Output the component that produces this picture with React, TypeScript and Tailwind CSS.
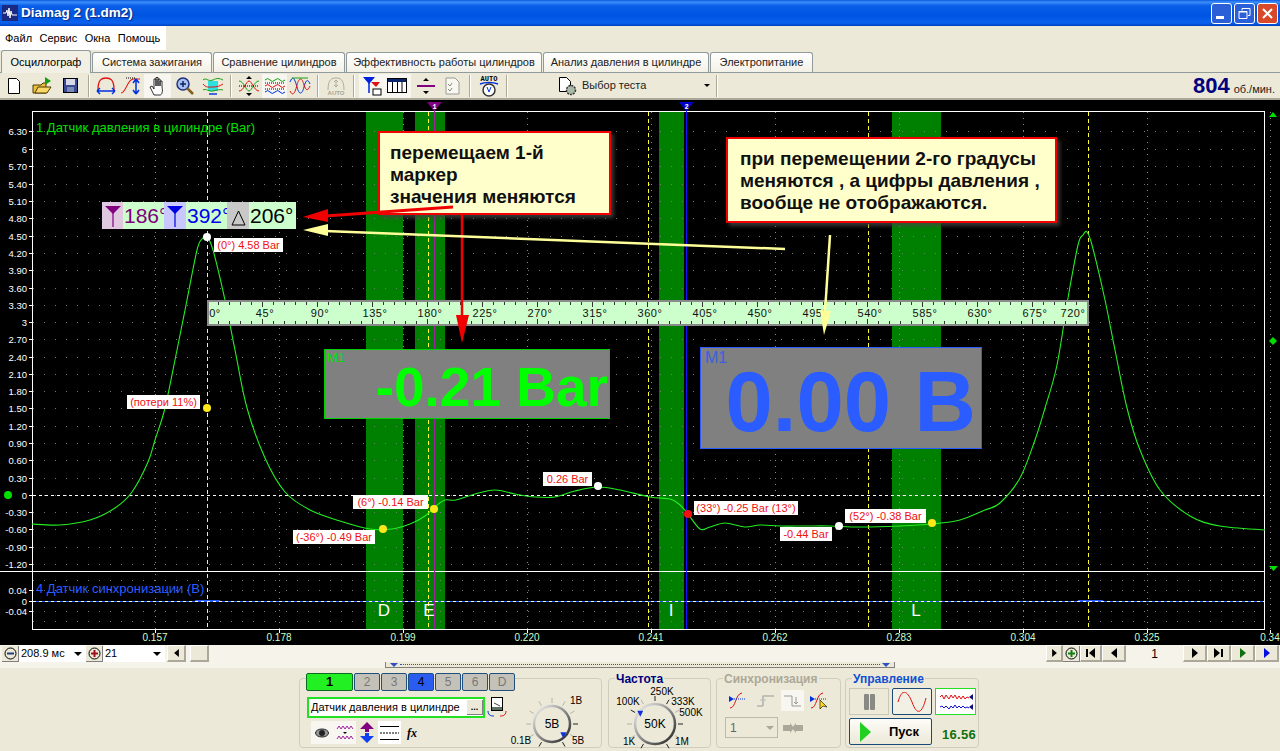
import React from 'react';

const FONT = "font-['Liberation_Sans',Arial,sans-serif]";

const yLabels: [string, number][] = [
  ['6.30', 131], ['6', 149], ['5.70', 166], ['5.40', 184], ['5.10', 201], ['4.80', 218], ['4.50', 236],
  ['4.20', 253], ['3.90', 270], ['3.60', 288], ['3.30', 305], ['3', 322], ['2.70', 339], ['2.40', 357],
  ['2.10', 374], ['1.80', 391], ['1.50', 408], ['1.20', 426], ['0.90', 443], ['0.60', 460], ['0.30', 478],
  ['0', 495], ['-0.30', 512], ['-0.60', 529], ['-0.90', 547], ['-1.20', 564],
  ['0.04', 590], ['0', 601], ['-0.04', 611],
];
const xLabels: [string, number][] = [
  ['0.157', 155], ['0.178', 279], ['0.199', 403], ['0.220', 527], ['0.241', 651],
  ['0.262', 775], ['0.283', 899], ['0.304', 1023], ['0.325', 1147], ['0.34', 1270],
];
const bands: [number, number][] = [[366, 403], [415, 445], [659, 684], [892, 941]];
const bandLetters: [string, number][] = [['D', 384], ['E', 429], ['I', 671], ['L', 916]];
const degrees = ['0°', '45°', '90°', '135°', '180°', '225°', '270°', '315°', '360°', '405°', '450°', '495°', '540°', '585°', '630°', '675°', '720°'];

const curve: [number, number][] = [
  [32, 524], [60, 525], [90, 520], [115, 508], [132, 492], [148, 462], [155, 440], [165, 408], [177, 350], [187, 300], [197, 250], [202, 239], [207, 237],
  [213, 250], [225, 300], [235, 350], [247, 408], [265, 458], [285, 492], [310, 510], [340, 521], [370, 529], [392, 529],
  [410, 524], [425, 516], [436, 506], [445, 500], [456, 500], [475, 494], [495, 490], [515, 494], [535, 497], [555, 497],
  [575, 491], [598, 487], [620, 490], [650, 497], [670, 499], [680, 505], [688, 514], [700, 529], [710, 527], [725, 523],
  [745, 527], [760, 525], [780, 526], [805, 526], [830, 526], [860, 527], [900, 526], [932, 524], [960, 520], [985, 510],
  [1000, 503], [1020, 478], [1035, 440], [1045, 408], [1057, 365], [1068, 298], [1078, 245], [1083, 235], [1087, 232],
  [1092, 245], [1105, 300], [1115, 350], [1127, 408], [1140, 450], [1160, 490], [1190, 516], [1220, 526], [1265, 530],
];

function smooth(pts: [number, number][]) {
  let d = `M${pts[0][0]} ${pts[0][1]}`;
  for (let i = 0; i < pts.length - 1; i++) {
    const p0 = pts[Math.max(i - 1, 0)];
    const p1 = pts[i];
    const p2 = pts[i + 1];
    const p3 = pts[Math.min(i + 2, pts.length - 1)];
    const c1x = p1[0] + (p2[0] - p0[0]) / 6;
    const c1y = p1[1] + (p2[1] - p0[1]) / 6;
    const c2x = p2[0] - (p3[0] - p1[0]) / 6;
    const c2y = p2[1] - (p3[1] - p1[1]) / 6;
    d += ` C${c1x.toFixed(1)} ${c1y.toFixed(1)} ${c2x.toFixed(1)} ${c2y.toFixed(1)} ${p2[0]} ${p2[1]}`;
  }
  return d;
}

const range = (from: number, to: number, step: number) => {
  const out: number[] = [];
  for (let v = from; v <= to; v += step) out.push(v);
  return out;
};

function PlotSvg() {
  const gridY = [...yLabels.map((l) => l[1]), 580, 621];
  return (
    <svg width="1280" height="545" viewBox="0 100 1280 545" className="absolute left-0 top-0">
      {bands.map(([a, b]) => <rect key={a} x={a} y={112} width={b - a} height={517} fill="#008000" />)}
      {/* dotted grid */}
      {gridY.map((y, i) => (
        <line key={i} x1={33} x2={1264} y1={y + 0.5} y2={y + 0.5} stroke="#777" strokeDasharray="1 10" />
      ))}
      {xLabels.map(([t, x]) => (
        <line key={t} x1={x + 0.5} x2={x + 0.5} y1={112} y2={629} stroke="#888" strokeDasharray="1 5" />
      ))}
      {/* yellow degree lines */}
      {[207, 428, 648, 868, 1088].map((x) => (
        <line key={x} x1={x + 0.5} x2={x + 0.5} y1={112} y2={629} stroke="#ffff33" strokeDasharray="4 3" />
      ))}
      {/* zero lines */}
      <line x1={33} x2={1264} y1={495.5} y2={495.5} stroke="#fff" strokeDasharray="3 3" />
      <line x1={33} x2={1264} y1={601.5} y2={601.5} stroke="#2a5cff" />
      <line x1={33} x2={1264} y1={601.5} y2={601.5} stroke="#fff" strokeDasharray="3 3" />
      {/* frame */}
      <rect x={32.5} y={111.5} width={1232} height={518} fill="none" stroke="#fff" />
      <line x1={0} x2={1265} y1={571.5} y2={571.5} stroke="#fff" />
      {/* axis ticks */}
      {yLabels.map(([t, y]) => <line key={t + y} x1={29} x2={32} y1={y + 0.5} y2={y + 0.5} stroke="#fff" />)}
      {xLabels.map(([t, x]) => <line key={t} x1={x + 0.5} x2={x + 0.5} y1={630} y2={633} stroke="#fff" />)}
      {yLabels.map(([t, y]) => (
        <text key={t + y} x={27} y={y + 4} fill="#fff" fontSize="9.5" textAnchor="end" fontFamily="Liberation Sans">{t}</text>
      ))}
      {xLabels.map(([t, x]) => (
        <text key={t} x={x} y={641} fill="#ccffcc" fontSize="10" textAnchor="middle" fontFamily="Liberation Sans">{t}</text>
      ))}
      {/* marker cursors */}
      <line x1={434.5} x2={434.5} y1={108} y2={629} stroke="#a020a0" />
      <line x1={686.5} x2={686.5} y1={108} y2={629} stroke="#1414ff" />
      <polygon points="427,102 442,102 434,111" fill="#800080" />
      <polygon points="679,102 694,102 686,111" fill="#0000c8" />
      <text x={434.5} y={109} fill="#fff" fontSize="7" fontWeight="700" textAnchor="middle" fontFamily="Liberation Mono">1</text>
      <text x={686.5} y={109} fill="#fff" fontSize="7" fontWeight="700" textAnchor="middle" fontFamily="Liberation Mono">2</text>
      {/* trace */}
      <path d={smooth(curve)} fill="none" stroke="#22ee22" strokeWidth="1.1" />
      <path d="M195 600.5 h25 M1078 600.5 h25" stroke="#2a5cff" strokeWidth="1" />
      {/* side markers */}
      <polygon points="1269,117 1277,117 1273,112" fill="#00e000" />
      <polygon points="1269,341 1273,337 1277,341 1273,345" fill="#00e000" />
      <polygon points="1269,566 1278,566 1273.5,571" fill="#00e000" />
      <circle cx={8} cy={495} r={4} fill="#00e000" />
      {/* points */}
      <circle cx={207} cy={237} r={4} fill="#fff" />
      <circle cx={207} cy={408} r={4} fill="#ffe81a" />
      <circle cx={383} cy={529} r={4} fill="#ffe81a" />
      <circle cx={434} cy={509} r={4} fill="#ffe81a" />
      <circle cx={598} cy={486} r={4} fill="#fff" />
      <circle cx={688} cy={514} r={4} fill="#f01010" />
      <circle cx={839} cy={526} r={4} fill="#fff" />
      <circle cx={932} cy={523} r={4} fill="#ffe81a" />
    </svg>
  );
}

function Tag({ x, y, w, children }: { x: number; y: number; w: number; children: React.ReactNode }) {
  return (
    <div
      className="absolute h-[14px] bg-white text-center text-[11px] leading-[14px] whitespace-nowrap text-[#f01010]"
      style={{ left: x, top: y - 100, width: w }}
    >
      {children}
    </div>
  );
}

function Callouts() {
  return (
    <>
      <div className="absolute left-[378px] top-[31px] h-[84px] w-[233px] border-2 border-[#f00000] bg-[#ffffcc] pl-[10px] pt-[9px] text-[19px] leading-[22px] font-bold text-[#101010] shadow-[3px_3px_4px_rgba(70,70,70,.8)]">
        перемещаем 1-й<br />маркер<br />значения меняются
      </div>
      <div className="absolute left-[726px] top-[37px] h-[86px] w-[331px] border-2 border-[#f00000] bg-[#ffffcc] pl-[12px] pt-[9px] text-[19px] leading-[22px] font-bold whitespace-nowrap text-[#101010] shadow-[3px_3px_4px_rgba(70,70,70,.8)]">
        при перемещении 2-го градусы<br />меняются , а цифры давления ,<br />вообще не отображаются.
      </div>
      <svg width="1280" height="545" viewBox="0 100 1280 545" className="absolute left-0 top-0">
        <path d="M453 207 L325 216" stroke="#f00000" strokeWidth="3" fill="none" />
        <polygon points="303,217 328,209 328,222" fill="#f00000" />
        <path d="M462 213 L462 320" stroke="#f00000" strokeWidth="2.5" fill="none" />
        <polygon points="462,343 456,315 469,315" fill="#f00000" />
        <path d="M785 249 L325 231" stroke="#ffff99" strokeWidth="2.5" fill="none" />
        <polygon points="303,230 328,224 328,236" fill="#ffff99" />
        <path d="M830 235 L825 312" stroke="#ffff99" strokeWidth="2.5" fill="none" />
        <polygon points="824,335 820,310 831,311" fill="#ffff99" />
      </svg>
    </>
  );
}

function MarkerGlyph({ color }: { color: string }) {
  return (
    <svg width="16" height="24" viewBox="0 0 16 24">
      <polygon points="0,2 16,2 8,10" fill={color} />
      <rect x="7.4" y="3" width="1.2" height="20" fill={color} />
    </svg>
  );
}

function Readout() {
  return (
    <div className="absolute left-[102px] top-[102px] flex h-[27px] w-[194px] items-center overflow-hidden bg-[#ccffcc] text-[21px] leading-[27px]">
      <div className="flex h-full w-[21px] shrink-0 items-center justify-center bg-[#e0c8e0]"><MarkerGlyph color="#800080" /></div>
      <div className="h-full w-[41px] shrink-0 overflow-hidden pl-[1px] whitespace-nowrap text-[#800080]">186°</div>
      <div className="flex h-full w-[22px] shrink-0 items-center justify-center bg-[#c8c8ff]"><MarkerGlyph color="#0000e0" /></div>
      <div className="h-full w-[41px] shrink-0 overflow-hidden pl-[1px] whitespace-nowrap text-[#0000f0]">392°</div>
      <div className="flex h-full w-[22px] shrink-0 items-end justify-center bg-[#c8c8c8] pb-[3px]">
        <svg width="15" height="16" viewBox="0 0 15 16"><path d="M7.5 1 L14 15 H1 Z" fill="none" stroke="#000" /></svg>
      </div>
      <div className="h-full flex-1 pl-[1px] whitespace-nowrap text-black">206°</div>
    </div>
  );
}

function Ruler() {
  return (
    <div className="absolute left-[207px] top-[200px] h-[26px] w-[882px] border-2 border-[#8a8a8a] bg-[#ccffcc]">
      <svg width="878" height="22" className="absolute left-0 top-0">
        {range(0, 880, 11).map((x, i) => (
          <g key={x} stroke="#333">
            <line x1={x - 1.5} x2={x - 1.5} y1={0} y2={i % 5 === 0 ? 5 : 3} />
            <line x1={x - 1.5} x2={x - 1.5} y1={i % 5 === 0 ? 17 : 19} y2={22} />
          </g>
        ))}
      </svg>
      {degrees.map((d, i) => {
        const cx = i === 0 ? 6 : i === 16 ? 864 : i * 55 + 1;
        return (
          <span key={d} className="absolute top-[4px] w-[40px] text-center text-[11px] leading-[14px] tracking-[0.6px] text-[#111]" style={{ left: cx - 20 }}>
            {d}
          </span>
        );
      })}
    </div>
  );
}

function BigValues() {
  return (
    <>
      <div className="absolute left-[324px] top-[249px] flex h-[70px] w-[286px] items-center justify-end border border-[#00d000] bg-[#808080] pt-[6px] pr-[1px] text-[55px] leading-none font-bold whitespace-nowrap text-[#00ff00]">
        <span className="absolute left-[2px] top-[1px] text-[13px] leading-[14px] font-normal text-[#00e000]">M1</span>
        -0.21 Bar
      </div>
      <div className="absolute left-[700px] top-[247px] flex h-[102px] w-[282px] items-center justify-end border border-[#2a5cff] bg-[#808080] pt-[6px] pr-[5px] text-[85px] leading-none font-bold whitespace-nowrap text-[#2a5cff]">
        <span className="absolute left-[4px] top-[2px] text-[16px] leading-[16px] font-normal text-[#3a60e0]">M1</span>
        0.00 B
      </div>
    </>
  );
}

function Chart() {
  return (
    <div className="relative h-[545px] w-full shrink-0 overflow-hidden bg-black">
      <PlotSvg />
      <div className="absolute left-[36px] top-[21px] text-[13px] leading-[14px] text-[#00e000]">1 Датчик давления в цилиндре (Bar)</div>
      <div className="absolute left-[36px] top-[482px] text-[13px] leading-[14px] text-[#2a5cff]">4 Датчик синхронизации (В)</div>
      {bandLetters.map(([l, x]) => (
        <span key={l} className="absolute top-[501px] w-[20px] text-center text-[17px] leading-[20px] text-white" style={{ left: x - 10 }}>{l}</span>
      ))}
      <Ruler />
      <BigValues />
      <Tag x={214} y={238} w={69}>(0°) 4.58 Bar</Tag>
      <Tag x={127} y={395} w={73}>(потери 11%)</Tag>
      <Tag x={293} y={530} w={82}>(-36°) -0.49 Bar</Tag>
      <Tag x={353} y={495} w={75}>(6°) -0.14 Bar</Tag>
      <Tag x={543} y={472} w={49}>0.26 Bar</Tag>
      <Tag x={694} y={501} w={104}>(33°) -0.25 Bar (13°)</Tag>
      <Tag x={780} y={527} w={52}>-0.44 Bar</Tag>
      <Tag x={845} y={509} w={81}>(52°) -0.38 Bar</Tag>
      <Readout />
      <Callouts />
    </div>
  );
}

function TitleBar() {
  return (
    <div className="flex h-[26px] shrink-0 items-center bg-[linear-gradient(180deg,#0a5ae0_0%,#3d8ffa_8%,#0a5fe8_22%,#0054e3_60%,#0a62ee_88%,#0040c0_100%)] pr-[2px] pl-[2px]">
      <svg width="16" height="16" viewBox="0 0 16 16" className="mr-[3px] shrink-0">
        <rect width="16" height="16" fill="#1a2a80" />
        <path d="M1 8 h3 l1 -3 l1 6 l1 -8 l1 10 l1 -7 l1 4 h5" stroke="#fff" fill="none" />
      </svg>
      <span className="flex-1 text-[13.5px] font-bold text-white [text-shadow:1px_1px_1px_#0a2a80]">Diamag 2 (1.dm2)</span>
      <div className="flex gap-[2px]">
        <div className="flex h-[21px] w-[21px] items-end rounded-[3px] border border-white bg-[#2a5fd8] pb-[4px] pl-[4px]"><div className="h-[3px] w-[8px] bg-white" /></div>
        <div className="flex h-[21px] w-[21px] items-center justify-center rounded-[3px] border border-white bg-[#2a5fd8]">
          <svg width="13" height="13" viewBox="0 0 13 13"><path d="M4 1.5 h8 v7 h-2 M4 1.5 v2 M1 4.5 h8 v7 h-8 z M1 5 h8" stroke="#fff" fill="none" /></svg>
        </div>
        <div className="flex h-[21px] w-[21px] items-center justify-center rounded-[3px] border border-white bg-[#d8492a]">
          <svg width="13" height="13" viewBox="0 0 13 13"><path d="M2 2 L11 11 M11 2 L2 11" stroke="#fff" strokeWidth="2" /></svg>
        </div>
      </div>
    </div>
  );
}

function MenuBar() {
  return (
    <div className="h-[24px] shrink-0 bg-[#ece9d8]">
      <div className="flex h-full w-[166px] items-center gap-[7.5px] bg-white pl-[5px] text-[11px] text-black">
        <span>Файл</span><span>Сервис</span><span>Окна</span><span>Помощь</span>
      </div>
    </div>
  );
}

const tabs: [string, number][] = [
  ['Система зажигания', 120], ['Сравнение цилиндров', 132], ['Эффективность работы цилиндров', 196],
  ['Анализ давления в цилиндре', 166], ['Электропитание', 103],
];

function Tabs() {
  return (
    <div className="flex h-[23px] shrink-0 items-end gap-[1px] border-b border-[#919b9c] bg-[#ece9d8] pl-[1px]">
      <div className="relative top-[1px] flex h-[23px] w-[90px] items-center justify-center rounded-t-[3px] border border-b-0 border-[#919b9c] bg-[#f2f0e4] text-[11px]">Осциллограф</div>
      {tabs.map(([t, w]) => (
        <div key={t} className="flex h-[20px] items-center justify-center rounded-t-[3px] border border-b-0 border-[#919b9c] bg-[linear-gradient(#fff,#f3f1e6)] text-[11px] whitespace-nowrap text-[#222]" style={{ width: w }}>
          {t}
        </div>
      ))}
    </div>
  );
}

const Sep = () => <div className="mx-[4px] h-[22px] w-[2px] shrink-0 border-r border-l border-r-white border-l-[#aca899]" />;

function TB({ w = 28, pressed, children }: { w?: number; pressed?: boolean; children: React.ReactNode }) {
  return (
    <div className={`flex h-[24px] shrink-0 items-center justify-center ${pressed ? 'bg-[#f7f6f0]' : ''}`} style={{ width: w }}>
      {children}
    </div>
  );
}

const Ico = ({ children, w = 22, h = 20 }: { children: React.ReactNode; w?: number; h?: number }) => (
  <svg width={w} height={h} viewBox={`0 0 ${w} ${h}`} fill="none">{children}</svg>
);

function Toolbar() {
  return (
    <div className="flex h-[27px] shrink-0 items-center border-b-2 border-[#aca899] bg-[#ece9d8] pl-[1px]">
      <TB w={26}><Ico w={14} h={18}><path d="M1.5 1.5 h8 l3 3 v12 h-11 z" fill="#fff" stroke="#000" /></Ico></TB>
      <TB w={29}>
        <Ico w={20} h={18}>
          <path d="M1 8 h8 l2 -2 h3 v10 h-13 z" fill="#e8c040" stroke="#503800" />
          <path d="M3 16 l3 -6 h13 l-4 6 z" fill="#f8d868" stroke="#503800" />
          <path d="M13 0 l6 4 l-6 4 z" fill="#10a010" />
        </Ico>
      </TB>
      <TB w={28}>
        <Ico w={15} h={15}><rect x="0.5" y="0.5" width="14" height="14" fill="#3a4a90" stroke="#000" /><rect x="3" y="1" width="9" height="6" fill="#d8d8e8" /><rect x="4" y="9" width="7" height="5" fill="#7a8ab8" /></Ico>
      </TB>
      <Sep />
      <TB w={24}><Ico><path d="M3 14 C3 3 7 2 11 2 C15 2 19 3 19 14" stroke="#e01010" strokeWidth="1.3" /><path d="M2 15 h18 M2 15 l3 -3 M2 15 l3 3 M20 15 l-3 -3 M20 15 l-3 3" stroke="#0030e0" strokeWidth="1.4" /></Ico></TB>
      <TB w={26}><Ico><path d="M1 17 C6 17 7 4 13 3 h7" stroke="#e01010" strokeWidth="1.1" /><path d="M6 2 h9" stroke="#000" strokeDasharray="1 1" /><path d="M16 3 v15 M16 3 l-3 4 M16 3 l3 4 M16 18 l-3 -4 M16 18 l3 -4" stroke="#0030e0" strokeWidth="1.5" /></Ico></TB>
      <TB w={27} pressed><Ico><path d="M7 19 L3 11 l2 -1 l2 3 V3 h2 v7 V1.5 h2 V10 V3 h2 v7 V5 h2 v6 c1 4 0 8 -2 8 z" fill="#fff" stroke="#000" strokeWidth="0.8" /></Ico></TB>
      <TB w={28}><Ico w={20} h={20}><circle cx="8" cy="8" r="6" fill="#a8c0f0" stroke="#203080" strokeWidth="1.5" /><path d="M5 8 h6 M8 5 v6" stroke="#102060" strokeWidth="1.5" /><path d="M12 12 l6 6" stroke="#806020" strokeWidth="2.5" /></Ico></TB>
      <TB w={27}><Ico><path d="M6 5 h10 v10 h-10 z" fill="#30e0e0" /><path d="M1 4 c3 -3 5 2 10 0 c4 -2 6 -2 10 0" stroke="#10a010" /><path d="M1 8 c3 4 6 3 10 3 c4 0 7 -1 10 -3" stroke="#e01010" /><path d="M1 14 c3 -2 6 2 10 1 c4 -1 7 -2 10 -1" stroke="#10a010" /><path d="M7 18 h8" stroke="#0030e0" strokeWidth="1.4" /></Ico></TB>
      <Sep />
      <TB w={26}><Ico><path d="M1 5 c5 0 7 10 10 10 c3 0 5 -10 10 -10" stroke="#10a010" /><path d="M1 15 c5 0 7 -10 10 -10 c3 0 5 10 10 10" stroke="#e01010" /><path d="M1 10 h20" stroke="#000" strokeDasharray="1 1" /><path d="M11 0 l-3 3 h6 z M11 20 l-3 -3 h6 z" fill="#000" /></Ico></TB>
      <TB w={25} pressed><Ico><path d="M1 4 q3 -3 5 0 t5 0 t5 0 t5 0" stroke="#10a010" /><path d="M1 10 q3 -3 5 0 t5 0 t5 0 t5 0" stroke="#e01010" /><path d="M1 16 q3 -3 5 0 t5 0 t5 0 t5 0" stroke="#0030e0" /><path d="M1 7 h20 M1 13 h20" stroke="#000" strokeDasharray="1 1" /></Ico></TB>
      <TB w={26}><Ico><path d="M1 6 c3 -8 5 -2 7 5 c2 8 5 8 7 0 c2 -8 4 -8 6 -3" stroke="#0030e0" /><path d="M1 15 c3 6 5 2 7 -6 c2 -8 5 -8 7 0 c2 6 4 6 6 1" stroke="#e01010" /><path d="M3 2 h16" stroke="#10a010" /></Ico></TB>
      <Sep />
      <TB w={26}>
        <Ico>
          <path d="M3 14 C3 3 7 2 11 2 C15 2 19 3 19 14" stroke="#b0ac9c" />
          <path d="M11 4 v7 M9 6 l2 -2 l2 2 M9 9 l2 2 l2 -2" stroke="#b0ac9c" />
          <text x="11" y="19" fontSize="6" fontWeight="700" textAnchor="middle" fill="#a8a494" fontFamily="Liberation Sans">AUTO</text>
        </Ico>
      </TB>
      <Sep />
      <TB w={24} pressed><Ico><path d="M3 1 h12 l-6 7 z" fill="#0020e0" /><path d="M9 4 v13" stroke="#0020e0" strokeWidth="1.5" /><path d="M11 6 h9 l-4 5 z" fill="#e01010" /><rect x="13" y="13" width="8" height="6" fill="#fff" stroke="#000" /></Ico></TB>
      <TB w={28} pressed><Ico w={20} h={15}><rect x="0.5" y="0.5" width="19" height="14" fill="#fff" stroke="#000" /><rect x="1" y="1" width="18" height="3" fill="#0a246a" /><path d="M5.5 4 v10 M10.5 4 v10 M15 4 v10" stroke="#000" /></Ico></TB>
      <TB w={29}><Ico w={20} h={18}><path d="M10 1 l-3 3 h6 z M10 17 l-3 -3 h6 z" fill="#000" /><rect x="1" y="8" width="18" height="2" fill="#800080" /></Ico></TB>
      <TB w={25}><Ico w={15} h={18}><path d="M1 1 h9 l4 4 v12 h-13 z" fill="#f8f8f0" stroke="#999" /><path d="M3 7 l2 2 l2 -3 M3 12 l2 2 l2 -3" stroke="#888" /></Ico></TB>
      <Sep />
      <TB w={27}>
        <Ico w={20} h={22}>
          <text x="10" y="6" fontSize="7" fontWeight="700" textAnchor="middle" fill="#000" fontFamily="Liberation Mono">AUTO</text>
          <path d="M1 9 c5 -2 13 -2 18 0" stroke="#0030e0" strokeWidth="1.5" />
          <circle cx="10" cy="15" r="6" fill="#fff" stroke="#333" strokeWidth="1.5" />
          <path d="M8 12 l2 5 l2 -5" stroke="#0030e0" />
        </Ico>
      </TB>
      <Sep />
      <div className="ml-[46px] flex h-[24px] w-[152px] shrink-0 items-center">
        <Ico w={20} h={20}>
          <path d="M1.5 1.5 h7 l4 4 v10 h-11 z" fill="#fff" stroke="#000" />
          <circle cx="13" cy="14" r="4.5" fill="#aab8a8" stroke="#333" strokeDasharray="2 1" strokeWidth="1.5" />
        </Ico>
        <span className="ml-[4px] flex-1 text-[11px] text-[#222]">Выбор теста</span>
        <span className="h-0 w-0 border-x-[3px] border-t-[3px] border-x-transparent border-t-black" />
      </div>
      <div className="ml-[6px] h-[22px] w-[2px] shrink-0 border-r border-l border-r-white border-l-[#aca899]" />
      <div className="flex flex-1 items-baseline justify-end pr-[5px] text-[#000080]">
        <span className="text-[22px] leading-[24px] font-bold">804</span>
        <span className="ml-[4px] text-[11px] text-[#222]">об./мин.</span>
      </div>
    </div>
  );
}

function RoundBtn({ color, sign }: { color: string; sign: 'minus' | 'plus' }) {
  return (
    <div className="flex h-[16px] w-[17px] shrink-0 items-center justify-center border-r border-b border-[#808080] bg-[#ece9d8]">
      <svg width="13" height="13" viewBox="0 0 13 13">
        <circle cx="6.5" cy="6.5" r="5.5" fill="none" stroke="#000" />
        <path d={sign === 'minus' ? 'M3 6.5 h7' : 'M3 6.5 h7 M6.5 3 v7'} stroke={color} strokeWidth="2" />
      </svg>
    </div>
  );
}

function NavBtn({ w = 23, children }: { w?: number; children: React.ReactNode }) {
  return (
    <div className="flex h-[17px] shrink-0 items-center justify-center border-t border-l border-r-2 border-b-2 border-t-white border-l-white border-r-[#aca899] border-b-[#aca899] bg-[#ece9d8]" style={{ width: w }}>
      {children}
    </div>
  );
}

const Tri = ({ dir = 'r', color = '#000', size = 5 }: { dir?: 'l' | 'r'; color?: string; size?: number }) => (
  <svg width={size + 1} height={size * 2} viewBox="0 0 6 10">
    <polygon points={dir === 'r' ? '0,0 6,5 0,10' : '6,0 0,5 6,10'} fill={color} />
  </svg>
);

function ScrollRow() {
  return (
    <div className="flex h-[17px] shrink-0 items-center bg-[#f5f3ea] pr-[1px]">
      <div className="ml-[2px]"><RoundBtn color="#204080" sign="minus" /></div>
      <div className="flex h-[17px] w-[67px] items-center bg-white pl-[2px] text-[11px]">
        <span className="flex-1">208.9 мс</span>
        <span className="mr-[4px] h-0 w-0 border-x-[4px] border-t-[4px] border-x-transparent border-t-black" />
      </div>
      <RoundBtn color="#a01020" sign="plus" />
      <div className="flex h-[17px] w-[62px] items-center bg-white pl-[2px] text-[11px]">
        <span className="flex-1">21</span>
        <span className="mr-[4px] h-0 w-0 border-x-[4px] border-t-[4px] border-x-transparent border-t-black" />
      </div>
      <div className="ml-[2px]"><NavBtn w={19}><Tri dir="l" size={4} /></NavBtn></div>
      <div className="ml-[4px]"><NavBtn w={19}><span /></NavBtn></div>
      <div className="flex-1" />
      <NavBtn w={17}><Tri size={4} /></NavBtn>
      <RoundBtn color="#108010" sign="plus" />
      <NavBtn w={22}>
        <span className="mr-[1px] h-[8px] w-[2px] bg-black" /><Tri dir="l" />
      </NavBtn>
      <NavBtn w={24}><Tri dir="l" /></NavBtn>
      <span className="w-[57px] text-center text-[12px]">1</span>
      <NavBtn w={24}><Tri /></NavBtn>
      <NavBtn w={24}><Tri /><span className="ml-[1px] h-[8px] w-[2px] bg-black" /></NavBtn>
      <NavBtn w={24}><Tri color="#107010" /></NavBtn>
      <NavBtn w={24}><Tri color="#0010e0" /></NavBtn>
    </div>
  );
}

const DownTri = () => <span className="h-0 w-0 shrink-0 border-x-[4px] border-t-[4px] border-x-transparent border-t-[#3050c0]" />;

function Splitter() {
  return (
    <div className="flex h-[6px] shrink-0 justify-center bg-[#f5f3ea]">
      <div className="flex h-[6px] w-[510px] items-center justify-between border-r border-b border-l border-[#808080] bg-[#ece9d8] px-[4px]">
        <DownTri />
        <div className="mx-[2px] h-0 flex-1 border-t border-dotted border-[#3050c0]" />
        <DownTri />
      </div>
    </div>
  );
}

function Group({ className, title, titleClass, children }: { className: string; title?: string; titleClass?: string; children: React.ReactNode }) {
  return (
    <div className={`relative h-[70px] shrink-0 rounded-[4px] border border-[#d0cdbc] ${className}`}>
      {title && <span className={`absolute -top-[6px] left-[6px] bg-[#ece9d8] px-[1px] text-[12px] leading-[13px] font-bold ${titleClass}`}>{title}</span>}
      {children}
    </div>
  );
}

function Knob({ size, label, activeDeg, dark }: { size: number; label: string; activeDeg: number; dark: number[] }) {
  const c = size / 2;
  const r = size / 2 - 12;
  const ticks = range(0, 300, 30);
  const id = `k${size}`;
  const pa = ((activeDeg + 120) * Math.PI) / 180;
  return (
    <svg width={size} height={size} viewBox={`0 0 ${size} ${size}`}>
      <defs>
        <linearGradient id={id} x1="0" y1="0" x2="1" y2="1">
          <stop offset="0" stopColor="#f8f8f8" />
          <stop offset="1" stopColor="#202020" />
        </linearGradient>
      </defs>
      {ticks.map((t) => {
        const a = ((t + 120) * Math.PI) / 180;
        return (
          <line key={t} x1={c + Math.cos(a) * (r + 3)} y1={c + Math.sin(a) * (r + 3)} x2={c + Math.cos(a) * (r + 8)} y2={c + Math.sin(a) * (r + 8)} stroke={dark.includes(t) ? '#222' : '#b8b4a4'} />
        );
      })}
      <circle cx={c} cy={c} r={r} fill="none" stroke={`url(#${id})`} strokeWidth="2.5" />
      <text x={c} y={c + 4} textAnchor="middle" fontSize="12" fill="#000" fontFamily="Liberation Sans">{label}</text>
      <polygon points="-3,-3 3,-3 0,3" fill="#1030e0" transform={`translate(${c + Math.cos(pa) * (r - 2)} ${c + Math.sin(pa) * (r - 2)})`} />
    </svg>
  );
}

const KnobLabel = ({ className, children }: { className: string; children: React.ReactNode }) => (
  <span className={`absolute w-[30px] text-center text-[10px] leading-[10px] ${className}`}>{children}</span>
);

const channels: [string, string][] = [
  ['2', 'off'], ['3', 'off'], ['4', 'blue'], ['5', 'off'], ['6', 'off'], ['D', 'off'],
];

function ChannelPanel() {
  return (
    <Group className="ml-[299px] w-[303px]">
      <div className="absolute -top-[6px] left-[6px] flex gap-[1px]">
        <div className="flex h-[18px] w-[47px] items-center justify-center rounded-[2px] border border-[#0a6a20] bg-[#22f022] text-[13px] font-bold">1</div>
        {channels.map(([c, s]) => (
          <div key={c} className={`flex h-[18px] w-[26px] items-center justify-center rounded-[2px] border border-[#1f4f7f] text-[12px] ${s === 'blue' ? 'bg-[#2a5cf0] text-black' : 'bg-[#c4c2b8] text-[#777]'}`}>{c}</div>
        ))}
      </div>
      <div className="absolute top-[18px] left-[7px] flex h-[21px] w-[178px] items-center border-2 border-[#22e022] bg-white pl-[2px] text-[11px]">
        <span className="flex-1 whitespace-nowrap">Датчик давления в цилиндре</span>
        <span className="flex h-[15px] w-[16px] items-center justify-center border-r border-b border-[#808080] bg-[#ece9d8] text-[9px] leading-none font-bold">...</span>
      </div>
      <svg width="20" height="22" viewBox="0 0 20 22" className="absolute top-[18px] left-[187px]">
        <rect x="4.5" y="0.5" width="11" height="13" fill="#fff" stroke="#000" />
        <path d="M7 6 l6 3" stroke="#444" />
        <rect x="5" y="10" width="10" height="3" fill="#607060" />
        <path d="M1 14 c0 5 4 5 6 5" stroke="#0030e0" fill="none" />
        <path d="M19 14 c0 5 -4 5 -6 5" stroke="#e01010" fill="none" />
      </svg>
      <div className="absolute top-[42px] left-[11px] flex items-center">
        <div className="flex h-[23px] w-[22px] items-center justify-center bg-[#f7f6f0]">
          <svg width="14" height="10" viewBox="0 0 14 10"><ellipse cx="7" cy="5" rx="6.5" ry="4" fill="#999" stroke="#222" /><circle cx="7" cy="5" r="3" fill="#222" /></svg>
        </div>
        <div className="flex h-[23px] w-[23px] items-center justify-center bg-[#f7f6f0]">
          <svg width="18" height="18" viewBox="0 0 18 18" fill="none"><path d="M1 5 l2 -3 l2 3 l2 -3 l2 3 l2 -3 l2 3 l2 -3 l2 3" stroke="#a020a0" /><path d="M1 15 l2 -3 l2 3 l2 -3 l2 3 l2 -3 l2 3 l2 -3 l2 3" stroke="#a020a0" /><path d="M7 8 h4 l-2 2 z" fill="#000" /></svg>
        </div>
        <div className="ml-[3px] flex h-[23px] w-[15px] items-center justify-center">
          <svg width="14" height="21" viewBox="0 0 14 21"><polygon points="7,0 14,7 9,7 9,10 5,10 5,7 0,7" fill="#800080" /><polygon points="7,21 14,14 9,14 9,11 5,11 5,14 0,14" fill="#1040f0" /></svg>
        </div>
        <div className="ml-[4px] flex h-[23px] w-[23px] items-center justify-center bg-white">
          <svg width="19" height="16" viewBox="0 0 19 16"><path d="M0 1.5 h19 M0 14.5 h19" stroke="#000" /><path d="M0 8 h19" stroke="#000" strokeDasharray="2 1" /></svg>
        </div>
        <span className="ml-[6px] font-['Liberation_Serif'] text-[12px] leading-none font-bold italic">fx</span>
      </div>
      <div className="absolute top-[15px] left-[222px]"><Knob size={60} label="5В" activeDeg={285} dark={[0, 240, 300]} /></div>
      <KnobLabel className="top-[17px] left-[261px]">1В</KnobLabel>
      <KnobLabel className="top-[57px] left-[206px]">0.1В</KnobLabel>
      <KnobLabel className="top-[57px] left-[263px]">5В</KnobLabel>
    </Group>
  );
}

function FreqPanel() {
  return (
    <Group className="ml-[6px] w-[103px]" title="Частота" titleClass="text-[#000080]">
      <div className="absolute top-[13px] left-[14px]"><Knob size={64} label="50K" activeDeg={95} dark={[0, 90, 150, 180, 240, 300]} /></div>
      <KnobLabel className="top-[8px] left-[38px]">250K</KnobLabel>
      <KnobLabel className="top-[18px] left-[4px]">100K</KnobLabel>
      <KnobLabel className="top-[18px] left-[59px]">333K</KnobLabel>
      <KnobLabel className="top-[29px] left-[67px]">500K</KnobLabel>
      <KnobLabel className="top-[58px] left-[5px]">1K</KnobLabel>
      <KnobLabel className="top-[58px] left-[58px]">1M</KnobLabel>
    </Group>
  );
}

function SyncPanel() {
  return (
    <Group className="ml-[5px] w-[125px]" title="Синхронизация" titleClass="text-[#aca899]">
      <div className="absolute top-[11px] left-[8px] flex">
        <div className="flex h-[21px] w-[27px] items-center justify-center">
          <svg width="20" height="20" viewBox="0 0 20 20" fill="none"><path d="M1 17 c6 0 5 -14 12 -15" stroke="#e01010" /><path d="M5 8 h12" stroke="#0030e0" strokeDasharray="1 1" /><polygon points="0,5 5,8 0,11" fill="#0030e0" /></svg>
        </div>
        <div className="flex h-[21px] w-[27px] items-center justify-center">
          <svg width="18" height="16" viewBox="0 0 18 16" fill="none"><path d="M0 13 h6 v-10 h11" stroke="#999" /><path d="M6 2 v11 M3 7 h6" stroke="#bbb" /></svg>
        </div>
        <div className="mx-[2px] flex h-[21px] w-[23px] items-center justify-center bg-[#f7f6f0]">
          <svg width="18" height="16" viewBox="0 0 18 16" fill="none"><path d="M0 3 h8 v10 h9" stroke="#999" /><path d="M12 4 v7 M10 9 l2 2 l2 -2" stroke="#999" /></svg>
        </div>
        <div className="flex h-[21px] w-[27px] items-center justify-center">
          <svg width="20" height="20" viewBox="0 0 20 20" fill="none"><path d="M1 17 c6 0 5 -14 12 -15" stroke="#e01010" /><path d="M5 8 h12" stroke="#0030e0" strokeDasharray="1 1" /><polygon points="0,5 5,8 0,11" fill="#0030e0" /><polygon points="10,9 10,18 13,15 17,16" fill="#ffd820" stroke="#000" strokeWidth="0.6" /></svg>
        </div>
      </div>
      <div className="absolute top-[38px] left-[8px] flex h-[21px] w-[53px] items-center border border-[#bdb9a8] pl-[4px] text-[12px] text-[#666]">
        <span className="flex-1">1</span>
        <span className="mr-[3px] h-0 w-0 border-x-[4px] border-t-[4px] border-x-transparent border-t-[#aca899]" />
      </div>
      <svg width="20" height="10" viewBox="0 0 20 10" className="absolute top-[44px] left-[66px]">
        <polygon points="0,2 7,2 7,0 11,5 7,10 7,8 0,8" fill="#aca899" />
        <polygon points="20,2 13,2 13,0 9,5 13,10 13,8 20,8" fill="#aca899" />
      </svg>
    </Group>
  );
}

function ControlPanel() {
  return (
    <Group className="ml-[4px] w-[134px]" title="Управление" titleClass="text-[#1050d0]">
      <div className="absolute top-[9px] left-[3px] flex gap-[3px]">
        <div className="flex h-[27px] w-[40px] items-center justify-center gap-[1px] border border-[#cac7b5]">
          <span className="h-[16px] w-[5px] rounded-[1px] bg-[#8a8a84]" /><span className="h-[16px] w-[5px] rounded-[1px] bg-[#8a8a84]" />
        </div>
        <div className="flex h-[27px] w-[40px] items-center justify-center rounded-[2px] border border-[#1a4a78] bg-[#f2f0e4]">
          <svg width="30" height="20" viewBox="0 0 30 20" fill="none"><path d="M1 10 C5 -4 10 -2 15 10 C20 24 25 22 29 6" stroke="#e01010" /></svg>
        </div>
        <div className="flex h-[27px] w-[41px] items-center justify-center border border-[#22e022] bg-white">
          <svg width="34" height="22" viewBox="0 0 34 22" fill="none"><path d="M1 6 l2 -2 l2 4 l2 -4 l3 4 l2 -4 l2 3 l2 -3 l2 4 l2 -3 l2 3 l2 -3 l2 3 l2 -2 l2 1" stroke="#e01010" /><path d="M1 16 l2 -1 l2 2 l2 -2 l3 3 l2 -3 l2 2 l2 -3 l2 3 l2 -2 l2 2 l2 -2 l2 2 l2 -1 l2 1" stroke="#1010d0" /><polygon points="34,3 30,6 34,9" fill="#10107a" /><polygon points="34,13 30,16 34,19" fill="#10107a" /></svg>
        </div>
      </div>
      <div className="absolute top-[39px] left-[3px] flex h-[27px] w-[83px] items-center rounded-[2px] border border-[#1a4a78] bg-[linear-gradient(#fdfcf8,#ece9d8)] pl-[10px] text-[13px] font-bold">
        <svg width="11" height="20" viewBox="0 0 11 20"><polygon points="0,0 11,10 0,20" fill="#22d022" /></svg>
        <span className="ml-[18px]">Пуск</span>
      </div>
      <span className="absolute top-[49px] left-[96px] text-[13px] leading-[14px] font-bold tracking-[0.3px] text-[#107010]">16.56</span>
    </Group>
  );
}

export default function App() {
  return (
    <div className={`flex h-[751px] w-[1280px] flex-col overflow-hidden bg-[#ece9d8] text-black ${FONT}`}>
      <TitleBar />
      <MenuBar />
      <Tabs />
      <Toolbar />
      <Chart />
      <ScrollRow />
      <Splitter />
      <div className="mt-[10px] flex">
        <ChannelPanel />
        <FreqPanel />
        <SyncPanel />
        <ControlPanel />
      </div>
    </div>
  );
}
